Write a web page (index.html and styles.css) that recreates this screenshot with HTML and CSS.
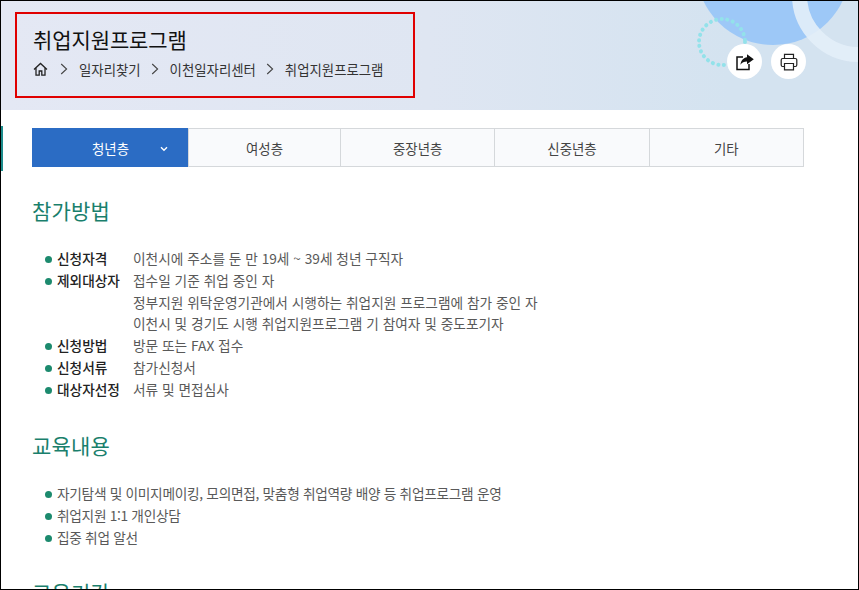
FILE: index.html
```html
<!DOCTYPE html>
<html lang="ko">
<head>
<meta charset="utf-8">
<title>취업지원프로그램</title>
<link rel="stylesheet" href="styles.css">
</head>
<body>
<div class="frame">
  <span class="edge-mark edge-dark"></span>
  <span class="edge-mark edge-teal"></span>
  <header class="hero">
    <svg class="hero-art" width="859" height="110" viewBox="0 0 859 110" aria-hidden="true">
      <circle cx="773" cy="-32" r="77" fill="#9dc8f7"/>
      <circle cx="859" cy="-5" r="59.500" fill="none" stroke="#e3eef8" stroke-opacity="0.9" stroke-width="15"/>
      <circle cx="722" cy="42" r="23" fill="none" stroke="#93e2ea" stroke-width="4" stroke-linecap="round" stroke-dasharray="0.1 5.550"/>
    </svg>
    <div class="title-box">
      <h1 class="page-title">취업지원프로그램</h1>
      <nav class="crumbs">
        <svg class="home" width="15" height="15" viewBox="0 0 15 15" aria-hidden="true"><path d="M1 7.400 7.500 1.400 14 7.400M3 6v7.200h3.200V9h2.600v4.200H12V6" fill="none" stroke="#222" stroke-width="1.300"/></svg>
        <svg class="sep" width="8" height="12" viewBox="0 0 8 12" aria-hidden="true"><path d="M1.200 1 6.600 6 1.200 11" fill="none" stroke="#444" stroke-width="1.100"/></svg>
        <span>일자리찾기</span>
        <svg class="sep" width="8" height="12" viewBox="0 0 8 12" aria-hidden="true"><path d="M1.200 1 6.600 6 1.200 11" fill="none" stroke="#444" stroke-width="1.100"/></svg>
        <span>이천일자리센터</span>
        <svg class="sep" width="8" height="12" viewBox="0 0 8 12" aria-hidden="true"><path d="M1.200 1 6.600 6 1.200 11" fill="none" stroke="#444" stroke-width="1.100"/></svg>
        <span>취업지원프로그램</span>
      </nav>
    </div>
    <div class="tools">
      <button class="tool" aria-label="공유">
        <svg width="20" height="18" viewBox="0 0 20 18"><path d="M8 4H2v12.500h12V11" fill="none" stroke="#111" stroke-width="1.500"/><path d="M12 1.200l6.800 5-6.800 5V8.400c-3 0-5 .9-6.600 3.400C6 7.500 8.500 4.700 12 4.300z" fill="#111"/></svg>
      </button>
      <button class="tool" aria-label="인쇄">
        <svg width="18" height="18" viewBox="0 0 18 18"><path d="M4.500 5.500V1.300h9v4.200M4.500 13.500H2.700a1.500 1.500 0 0 1-1.500-1.500V7a1.500 1.500 0 0 1 1.500-1.500h12.600A1.500 1.500 0 0 1 16.800 7v5a1.500 1.500 0 0 1-1.500 1.500h-1.800" fill="none" stroke="#222" stroke-width="1.200"/><path d="M4.500 10.500h9v6.300h-9z" fill="none" stroke="#222" stroke-width="1.200"/></svg>
      </button>
    </div>
  </header>

  <main class="content">
    <ul class="tabs">
      <li class="tab tab-on">청년층<svg class="caret" width="8" height="6" viewBox="0 0 8 6" aria-hidden="true"><path d="M1 1.200 4 4.200 7 1.200" fill="none" stroke="#fff" stroke-width="1.400"/></svg></li>
      <li class="tab">여성층</li>
      <li class="tab">중장년층</li>
      <li class="tab">신중년층</li>
      <li class="tab">기타</li>
    </ul>

    <h2 class="section-title">참가방법</h2>
    <ul class="info">
      <li class="row"><b class="label">신청자격</b><span>이천시에 주소를 둔 만 19세 ~ 39세 청년 구직자</span></li>
      <li class="row"><b class="label">제외대상자</b><span>접수일 기준 취업 중인 자<br>정부지원 위탁운영기관에서 시행하는 취업지원 프로그램에 참가 중인 자<br>이천시 및 경기도 시행 취업지원프로그램 기 참여자 및 중도포기자</span></li>
      <li class="row"><b class="label">신청방법</b><span>방문 또는 FAX 접수</span></li>
      <li class="row"><b class="label">신청서류</b><span>참가신청서</span></li>
      <li class="row"><b class="label">대상자선정</b><span>서류 및 면접심사</span></li>
    </ul>

    <h2 class="section-title">교육내용</h2>
    <ul class="info info-plain">
      <li class="row">자기탐색 및 이미지메이킹, 모의면접, 맞춤형 취업역량 배양 등 취업프로그램 운영</li>
      <li class="row">취업지원 1:1 개인상담</li>
      <li class="row">집중 취업 알선</li>
    </ul>

    <h2 class="section-title">교육기간</h2>
  </main>
</div>
</body>
</html>
```

FILE: styles.css
```css
* { box-sizing: border-box; }
html, body { margin: 0; height: 100%; overflow: hidden; background: #fff; }
body { font-family: "Noto Sans CJK KR", "Noto Sans", sans-serif; color: #555; }

.frame {
  position: relative;
  width: 859px;
  height: 590px;
  overflow: hidden;
  border: 1px solid #000;
}

.edge-mark { position: absolute; left: 0; width: 2px; }
.edge-dark { top: 25px; height: 20px; background: #22404a; }
.edge-teal { top: 125px; height: 45px; background: #1c8c8c; }

.hero {
  position: relative;
  height: 109px;
  background: linear-gradient(90deg, #e4e8f4 0%, #dfe6f2 50%, #d4e3f0 85%);
  overflow: hidden;
}
.hero-art { position: absolute; left: -1px; top: -1px; }

.title-box {
  position: absolute;
  left: 14px;
  top: 11px;
  width: 400px;
  height: 86px;
  border: 2px solid #e00000;
  padding: 11px 16px 0;
}
.page-title { margin: 0; font-size: 21px; font-weight: 400; line-height: 28px; color: #111; letter-spacing: -0.1px; }
.crumbs { display: flex; align-items: center; margin-top: 7px; font-size: 13.400px; line-height: 18px; color: #333; white-space: nowrap; }
.home { margin-right: 12px; }
.sep { margin-right: 11px; }
.crumbs span { margin-right: 10px; }

.tools { position: absolute; left: 726px; top: 43px; display: flex; gap: 9px; }
.tool {
  display: flex; align-items: center; justify-content: center;
  width: 35px; height: 35px; padding: 0;
  border: 0; border-radius: 50%; background: #fff;
}

.content { padding: 18px 54px 0 31px; }

.tabs { display: flex; margin: 0; padding: 0; list-style: none; height: 39px; }
.tab {
  flex: 1 1 0;
  display: flex; align-items: center; justify-content: center;
  position: relative;
  margin-left: -1px;
  font-size: 13.400px; color: #444;
  background: #f9fafc;
  border: 1px solid #d5d8db;
}
.tab:first-child { margin-left: 0; flex: 0 0 157px; }
.tab:nth-child(2) { flex: 0 0 153px; }
.tab-on { background: #2b6cc4; border-color: #2b6cc4; color: #fff; }
.caret { position: absolute; right: 20px; top: 17px; }

.section-title { margin: 0; font-size: 21px; font-weight: 400; line-height: 30px; color: #1a7f6c; letter-spacing: 0.2px; }
.tabs + .section-title { margin-top: 28px; }
.info + .section-title { margin-top: 29px; }

.info { margin: 23px 0 0; padding: 0 0 0 12px; list-style: none; font-size: 13.700px; line-height: 21.800px; color: #595959; }
.info-plain { margin-top: 23.500px; letter-spacing: -0.3px; }
.row { display: flex; position: relative; padding-left: 13px; }
.row::before {
  content: ""; position: absolute; left: 1px; top: 8px;
  width: 7px; height: 7px; border-radius: 50%; background: #1c8a6e;
}
.label { flex: 0 0 76px; font-weight: 500; color: #222; }
```
